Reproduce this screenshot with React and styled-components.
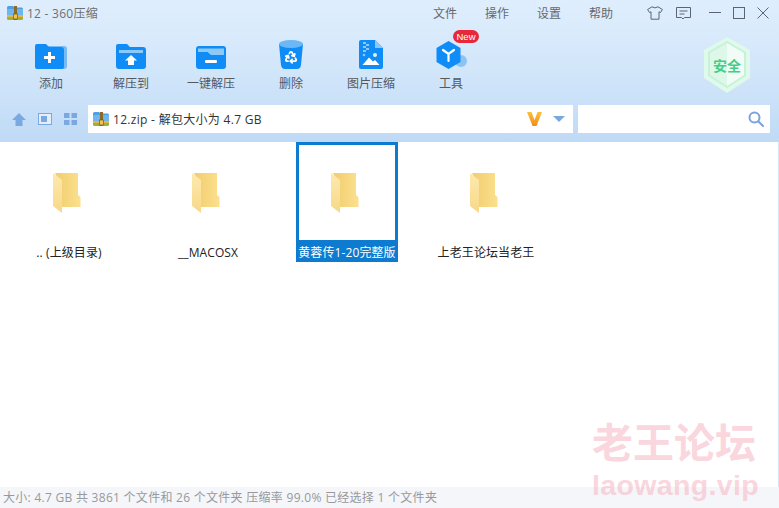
import React from "react";
import styled, { createGlobalStyle } from "styled-components";
import { Recycle } from "lucide-react";

const Global = createGlobalStyle`
  html, body { margin: 0; padding: 0; background: #fff; }
  * { box-sizing: border-box; }
  body { font-family: "Open Sans", "Noto Sans CJK SC", sans-serif; }
`;

const Win = styled.div`
  position: relative; width: 779px; height: 508px; overflow: hidden;
  display: flex; flex-direction: column; background: #fff;
`;
const Header = styled.header`
  height: 142px; display: flex; flex-direction: column;
  background: linear-gradient(180deg, #dfeefd 0%, #d2e6fa 50%, #bfdaf6 100%);
`;
const TitleBar = styled.div`
  height: 28px; display: flex; align-items: center; padding: 0 0 2px 7px; color: #666;
`;
const Title = styled.span`
  font-size: 12px; margin-left: 4px; color: #6d6f73; letter-spacing: .25px;
`;
const Menu = styled.nav`
  margin-left: auto; display: flex; gap: 28px; margin-right: 30px;
`;
const MenuItem = styled.span`
  font-size: 12px; color: #66686c; width: 24px; white-space: nowrap;
`;
const WinIcons = styled.div`
  display: flex; align-items: center;
`;
const WinBtn = styled.span`
  display: flex; width: ${p => p.$w}px; justify-content: center;
`;
const Toolbar = styled.div`
  height: 77px; display: flex; padding: 11px 28px 0 11px; align-items: flex-start;
`;
const Tool = styled.div`
  position: relative; width: 80px; display: flex; flex-direction: column; align-items: center;
`;
const ToolIcon = styled.div`
  height: 37px; display: flex; align-items: flex-end; justify-content: center; padding-bottom: 7px;
`;
const ToolLabel = styled.span`
  font-size: 12px; line-height: 16px; color: #55585c; white-space: nowrap;
`;
const Badge = styled.span`
  position: absolute; left: 42px; top: -9px; width: 26px; height: 13px; border-radius: 7px;
  background: #e8273a; color: #fff; font: 9.5px/13px "Liberation Sans", sans-serif; text-align: center;
`;
const Shield = styled.div`
  position: relative; margin-left: auto; margin-top: -2px; width: 48px; height: 56px;
`;
const ShieldText = styled.span`
  position: absolute; inset: 0; display: flex; align-items: center; justify-content: center;
  font-size: 14px; font-weight: 700; color: #45cd87; letter-spacing: 0;
`;
const AddressRow = styled.div`
  height: 37px; display: flex; align-items: flex-start; padding-left: 12px;
`;
const NavIcons = styled.div`
  width: 76px; height: 28px; display: flex; align-items: center; gap: 12px;
`;
const Address = styled.div`
  width: 485px; height: 28px; background: #fff; display: flex; align-items: center; padding: 0 8px 0 5px;
`;
const AddressText = styled.span`
  font-size: 12px; color: #333; margin-left: 4px; letter-spacing: .3px; white-space: pre;
`;
const AddressEnd = styled.div`
  margin-left: auto; display: flex; align-items: center; gap: 11px;
`;
const Search = styled.div`
  width: 192px; height: 28px; margin-left: 5px; background: #fff; display: flex; align-items: center;
  justify-content: flex-end; padding-right: 6px;
`;
const Content = styled.main`
  flex: 1; display: flex; gap: 37px; padding-left: 18px; align-items: flex-start;
  border-right: 1px solid #d4e5f7;
`;
const Item = styled.div`
  width: 102px; display: flex; flex-direction: column; align-items: center;
`;
const Thumb = styled.div`
  width: 102px; height: 101px; display: flex; justify-content: center; padding: 28px 5px 0 0;
  border: 3px solid ${p => (p.$selected ? "#0c7bd0" : "transparent")};
`;
const Name = styled.span`
  width: 102px; height: 19px; font-size: 12px; line-height: 19px; text-align: center; white-space: nowrap;
  letter-spacing: .1px;
  color: ${p => (p.$selected ? "#fff" : "#222")};
  background: ${p => (p.$selected ? "#0c7bd0" : "transparent")};
`;
const Status = styled.footer`
  height: 21px; background: #f5f6f9; color: #97999c; font-size: 12px; line-height: 21px; padding-left: 3px;
  white-space: pre; letter-spacing: .28px;
`;
const Watermark = styled.div`
  position: absolute; left: 592px; top: 416px; width: 170px; color: #f7b6c4; opacity: .55;
  display: flex; flex-direction: column; pointer-events: none; font-weight: 700;
`;
const WmCn = styled.span`
  font-size: 41px; line-height: 52px; letter-spacing: 0; white-space: nowrap;
`;
const WmEn = styled.span`
  font: 700 28.5px/34px "Liberation Sans", sans-serif; letter-spacing: .35px; white-space: nowrap;
`;

const Zip = ({ s = 16 }) => (
  <svg width={s} height={s} viewBox="0 0 16 16">
    <path d="M0 2.5 Q0 1 1.5 1 H6 L7.5 2.5 H14.5 Q16 2.5 16 4 V11 H0Z" fill="#4f9fe4" />
    <path d="M0 4 H16 V10 H0Z" fill="#6db6ee" />
    <path d="M0 11 H16 V13.5 Q16 15 14.5 15 H1.5 Q0 15 0 13.5Z" fill="#9cb23d" />
    <rect x="0" y="10" width="16" height="2" fill="#e2b64a" />
    <rect x="7" y="1" width="3" height="14" fill="#8a6a2c" />
    <rect x="6.5" y="9" width="4" height="5" fill="#f1c34f" stroke="#7a5a20" strokeWidth=".7" />
  </svg>
);

const AddIcon = () => (
  <svg width="32" height="25" viewBox="0 0 32 25">
    <path d="M8 2 H29 Q32 2 32 5 V22 Q32 25 29 25 H8Z" fill="#76baf6" />
    <path d="M0 2 Q0 0 2 0 H11 L14 3 H26 Q29 3 29 6 V23 Q29 25 27 25 H2 Q0 25 0 23Z" fill="#0f8cf5" />
    <path d="M13 8 H16 V12 H20 V15 H16 V19 H13 V15 H9 V12 H13Z" fill="#fff" />
  </svg>
);
const ExtractIcon = () => (
  <svg width="30" height="25" viewBox="0 0 30 25">
    <path d="M0 2 Q0 0 2 0 H11 L14 3 H27 Q30 3 30 6 V22 Q30 25 27 25 H3 Q0 25 0 22Z" fill="#0f8cf5" />
    <rect x="3" y="6" width="24" height="3" fill="#8cc8fa" />
    <path d="M15 11 L21 16.5 H18 V21 H12 V16.5 H9Z" fill="#fff" />
  </svg>
);
const OneClickIcon = () => (
  <svg width="30" height="23" viewBox="0 0 30 23">
    <path d="M0 3 Q0 0 3 0 H27 Q30 0 30 3 V20 Q30 23 27 23 H3 Q0 23 0 20Z" fill="#0f8cf5" />
    <path d="M2 2.500 H28 V9 H15 L11.500 6 H2Z" fill="#8cc8fa" />
    <rect x="9" y="14" width="12" height="3" rx="1" fill="#fff" />
  </svg>
);
const TrashIcon = () => (
  <svg width="24" height="29" viewBox="0 0 24 29">
    <path d="M0 4 L2 25 Q2.500 29 6 29 H18 Q21.500 29 22 25 L24 4Z" fill="#0f8cf5" />
    <ellipse cx="12" cy="4" rx="12" ry="4" fill="#6cb8f7" />
    <Recycle x="5" y="10" width="14" height="14" color="#fff" strokeWidth={3} />
  </svg>
);
const ImageIcon = () => (
  <svg width="24" height="29" viewBox="0 0 24 29">
    <path d="M2 0 H16 L24 8 V27 Q24 29 22 29 H2 Q0 29 0 27 V2 Q0 0 2 0Z" fill="#0f8cf5" />
    <path d="M16 0 L24 8 H16Z" fill="#8cc8fa" />
    <path d="M4 2 H7 V4 H4Z M7 4 H10 V6 H7Z M4 6 H7 V8 H4Z M7 8 H10 V10 H7Z M4 10 H7 V12 H4Z" fill="#8cc8fa" />
    <circle cx="5" cy="15" r="1.300" fill="#8cc8fa" />
    <circle cx="16" cy="15" r="2" fill="#e4f2fe" />
    <path d="M3.500 25 L10 17.500 L14 21.500 L16 20 L20.500 25Z" fill="#fff" />
  </svg>
);
const ToolsIcon = () => (
  <svg width="31" height="28" viewBox="0 0 31 28">
    <circle cx="25" cy="20" r="6" fill="#8cc3f5" />
    <path d="M12.500 0 L24.500 7 V21 L12.500 28 L0.500 21 V7Z" fill="#0f8cf5" />
    <path d="M7 9 L12.500 13 L18 9 M12.500 13 V20" fill="none" stroke="#fff" strokeWidth="2.200" strokeLinecap="round" />
  </svg>
);
const ShieldArt = () => (
  <svg width="48" height="56" viewBox="0 0 48 56" style={{ position: "absolute", inset: 0 }}>
    <path d="M24 0 L47 13 V41 L24 56 L1 41 V13Z" fill="#dff9ea" />
    <path d="M24 4 L43 15 V39 L24 51 L5 39 V15Z" fill="#c6f2d9" />
    <path d="M24 6 L41 16 V38 L24 49Z" fill="#f0fcf5" />
    <path d="M24 6 L7 16 V38 L24 49Z" fill="#ddf7e8" />
  </svg>
);

const Shirt = () => (
  <svg width="16" height="14" viewBox="0 0 16 14" fill="none" stroke="#5b6470" strokeWidth="1">
    <path d="M5 .8 Q8 3 11 .8 L15.400 3.500 L13.500 6.500 L12 5.800 V13.200 H4 V5.800 L2.500 6.500 L.6 3.500Z" />
  </svg>
);
const Chat = () => (
  <svg width="15" height="13" viewBox="0 0 15 13" fill="none" stroke="#5b6470" strokeWidth="1">
    <path d="M.5 .5 H14.500 V10.500 H8.500 L7 12 L5.500 10.500 H.5Z" />
    <path d="M3.500 4 H11.500 M3.500 7 H8.500" />
  </svg>
);
const Min = () => <svg width="12" height="12" viewBox="0 0 12 12"><path d="M0 5.500 H12" stroke="#5b6470" /></svg>;
const Max = () => <svg width="12" height="12" viewBox="0 0 12 12"><rect x=".5" y=".5" width="11" height="11" fill="none" stroke="#5b6470" /></svg>;
const Close = () => <svg width="12" height="12" viewBox="0 0 12 12"><path d="M.5 .5 L11.500 11.500 M11.500 .5 L.5 11.500" stroke="#5b6470" /></svg>;

const Up = () => <svg width="14" height="13" viewBox="0 0 14 13"><path d="M7 0 L14 7 H10.500 V13 H3.500 V7 H0Z" fill="#7aa9e2" /></svg>;
const Panel = () => (
  <svg width="14" height="12" viewBox="0 0 14 12">
    <rect x=".5" y=".5" width="13" height="11" fill="#e4eefb" stroke="#7aa9e2" />
    <rect x="3" y="3" width="6" height="6" fill="#7aa9e2" />
  </svg>
);
const Grid4 = () => (
  <svg width="13" height="12" viewBox="0 0 13 12" fill="#7aa9e2">
    <rect width="5.500" height="5" /><rect x="7.500" width="5.500" height="5" />
    <rect y="7" width="5.500" height="5" /><rect x="7.500" y="7" width="5.500" height="5" />
  </svg>
);
const VMark = () => (
  <svg width="15" height="14" viewBox="0 0 15 14">
    <defs><linearGradient id="v" x1="0" y1="0" x2="0" y2="1"><stop offset="0" stopColor="#f9c23c" /><stop offset="1" stopColor="#f58a1f" /></linearGradient></defs>
    <path d="M0 0 H4.500 L7.500 8 L10.500 0 H15 L9.500 14 H5.500Z" fill="url(#v)" />
  </svg>
);
const Caret = () => <svg width="12" height="6" viewBox="0 0 12 6"><path d="M0 0 H12 L6 6Z" fill="#7aa9e2" /></svg>;
const Mag = () => (
  <svg width="16" height="16" viewBox="0 0 16 16" fill="none" stroke="#7aa3dc" strokeWidth="2">
    <circle cx="6.500" cy="6.500" r="5" /><path d="M10.500 10.500 L15 15" strokeLinecap="round" />
  </svg>
);
const Folder = () => (
  <svg width="28" height="40" viewBox="0 0 28 40">
    <defs>
      <linearGradient id="fb" x1="0" y1="0" x2="1" y2="0"><stop offset="0" stopColor="#f1cd6e" /><stop offset="1" stopColor="#fbe08e" /></linearGradient>
      <linearGradient id="ff" x1="0" y1="0" x2="0" y2="1"><stop offset="0" stopColor="#fde9ae" /><stop offset="1" stopColor="#f8d888" /></linearGradient>
    </defs>
    <path d="M2 0 H25 V22 L27.500 24 V34 H9 V14 L2 0Z" fill="url(#fb)" />
    <path d="M0 0 L9 7 V40 L0 33Z" fill="url(#ff)" />
  </svg>
);

const tools = [
  ["添加", <AddIcon />], ["解压到", <ExtractIcon />], ["一键解压", <OneClickIcon />],
  ["删除", <TrashIcon />], ["图片压缩", <ImageIcon />], ["工具", <ToolsIcon />, true],
];
const files = [[".. (上级目录)"], ["__MACOSX"], ["黄蓉传1-20完整版", true], ["上老王论坛当老王"]];

export default function App() {
  return (
    <Win>
      <Global />
      <Header>
        <TitleBar>
          <Zip />
          <Title>12 - 360压缩</Title>
          <Menu>{["文件", "操作", "设置", "帮助"].map(m => <MenuItem key={m}>{m}</MenuItem>)}</Menu>
          <WinIcons>
            <WinBtn $w={24}><Shirt /></WinBtn>
            <WinBtn $w={32}><Chat /></WinBtn>
            <WinBtn $w={32}><Min /></WinBtn>
            <WinBtn $w={16}><Max /></WinBtn>
            <WinBtn $w={32}><Close /></WinBtn>
          </WinIcons>
        </TitleBar>
        <Toolbar>
          {tools.map(([l, ic, isNew]) => (
            <Tool key={l}>
              <ToolIcon>{ic}</ToolIcon>
              {isNew && <Badge>New</Badge>}
              <ToolLabel>{l}</ToolLabel>
            </Tool>
          ))}
          <Shield><ShieldArt /><ShieldText>安全</ShieldText></Shield>
        </Toolbar>
        <AddressRow>
          <NavIcons><Up /><Panel /><Grid4 /></NavIcons>
          <Address>
            <Zip />
            <AddressText>12.zip - 解包大小为 4.7 GB</AddressText>
            <AddressEnd><VMark /><Caret /></AddressEnd>
          </Address>
          <Search><Mag /></Search>
        </AddressRow>
      </Header>
      <Content>
        {files.map(([n, sel]) => (
          <Item key={n}>
            <Thumb $selected={sel}><Folder /></Thumb>
            <Name $selected={sel}>{n}</Name>
          </Item>
        ))}
      </Content>
      <Status>大小: 4.7 GB 共 3861 个文件和 26 个文件夹 压缩率 99.0% 已经选择 1 个文件夹</Status>
      <Watermark>
        <WmCn>老王论坛</WmCn>
        <WmEn>laowang.vip</WmEn>
      </Watermark>
    </Win>
  );
}
